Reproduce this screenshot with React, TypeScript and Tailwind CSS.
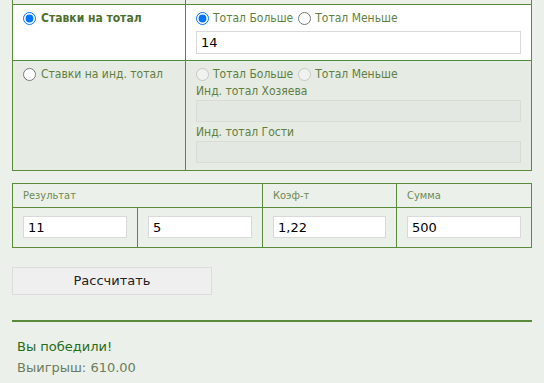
import React, { useState } from 'react';

const font = { fontFamily: '"DejaVu Sans", Verdana, sans-serif' };

export default function App() {
  const [mode, setMode] = useState<'total' | 'ind'>('total');
  const [side, setSide] = useState<'over' | 'under'>('over');

  return (
    <div className="min-h-screen bg-[#ebf0ea] px-3 text-[12px] leading-[15px] text-[#5f7f3f] font-['DejaVu_Sans_Condensed','DejaVu_Sans',Tahoma,sans-serif]">
      <table className="w-[520px] border-collapse">
        <tbody>
          <tr className="h-[4px]">
            <td className="w-[173px] border-x border-b border-[#5a8a3c] p-0"></td>
            <td className="border-x border-b border-[#5a8a3c] p-0"></td>
          </tr>
          <tr className="bg-white">
            <td className="border border-[#5a8a3c] px-[10px] pt-[6px] align-top">
              <label className="flex items-center gap-[5px] font-bold text-[#4f6f30]">
                <input type="radio" checked={mode === 'total'} onChange={() => setMode('total')} className="m-0 h-[13px] w-[13px]" />
                Ставки на тотал
              </label>
            </td>
            <td className="border border-[#5a8a3c] px-[10px] pt-[6px] pb-[6px] align-top">
              <div className="flex items-center gap-[4px]">
                <input type="radio" checked={side === 'over'} onChange={() => setSide('over')} className="m-0 h-[13px] w-[13px]" />
                <span>Тотал Больше</span>
                <input type="radio" checked={side === 'under'} onChange={() => setSide('under')} className="m-0 ml-[1px] h-[13px] w-[13px]" />
                <span>Тотал Меньше</span>
              </div>
              <input defaultValue="14" className="mt-[5px] block h-[23px] w-full border border-[#d9d9d9] bg-white px-[4px] text-[13px] text-black outline-none" style={font} />
            </td>
          </tr>
          <tr className="bg-[#e6ebe4]">
            <td className="border border-[#5a8a3c] px-[10px] pt-[6px] align-top">
              <label className="flex items-center gap-[5px]">
                <input type="radio" checked={mode === 'ind'} onChange={() => setMode('ind')} className="m-0 h-[13px] w-[13px]" />
                Ставки на инд. тотал
              </label>
            </td>
            <td className="border border-[#5a8a3c] px-[10px] pt-[6px] pb-[7px] align-top">
              <div className="flex items-center gap-[4px]">
                <input type="radio" disabled className="m-0 h-[13px] w-[13px]" />
                <span>Тотал Больше</span>
                <input type="radio" disabled className="m-0 ml-[1px] h-[13px] w-[13px]" />
                <span>Тотал Меньше</span>
              </div>
              <div className="mt-[2px]">Инд. тотал Хозяева</div>
              <input disabled className="mt-[1px] block h-[22px] w-full border border-[#d8ddd6] bg-[#e4e8e2]" />
              <div className="mt-[3px]">Инд. тотал Гости</div>
              <input disabled className="mt-[1px] block h-[22px] w-full border border-[#d8ddd6] bg-[#e4e8e2]" />
            </td>
          </tr>
        </tbody>
      </table>

      <table className="mt-[12px] w-[520px] border-collapse table-fixed">
        <colgroup>
          <col className="w-[125px]" />
          <col className="w-[125px]" />
          <col className="w-[134px]" />
          <col className="w-[135px]" />
        </colgroup>
        <tbody>
          <tr className="h-[24px] text-[11px] text-[#6d8a52]">
            <td colSpan={2} className="border border-[#5a8a3c] px-[10px]">Результат</td>
            <td className="border border-[#5a8a3c] px-[10px]">Коэф-т</td>
            <td className="border border-[#5a8a3c] px-[10px]">Сумма</td>
          </tr>
          <tr className="h-[40px]">
            {['11', '5', '1,22', '500'].map((v, i) => (
              <td key={i} className="border border-[#5a8a3c] px-[10px]">
                <input defaultValue={v} className="block h-[22px] w-full border border-[#d9d9d9] bg-white px-[4px] text-[13px] text-black outline-none" style={font} />
              </td>
            ))}
          </tr>
        </tbody>
      </table>

      <button className="mt-[19px] block h-[28px] w-[200px] border border-[#dcdcdc] bg-[#efefef] text-[13px] text-[#222]" style={font}>
        Рассчитать
      </button>

      <hr className="mt-[25px] w-[520px] border-0 border-t-2 border-[#5a8a3c]" />

      <div className="px-[5px] pt-[14px] text-[13px] leading-[21px]" style={font}>
        <div className="text-[#256b1c]">Вы победили!</div>
        <div className="text-[#6b7d5b]">Выигрыш: 610.00</div>
      </div>
    </div>
  );
}
